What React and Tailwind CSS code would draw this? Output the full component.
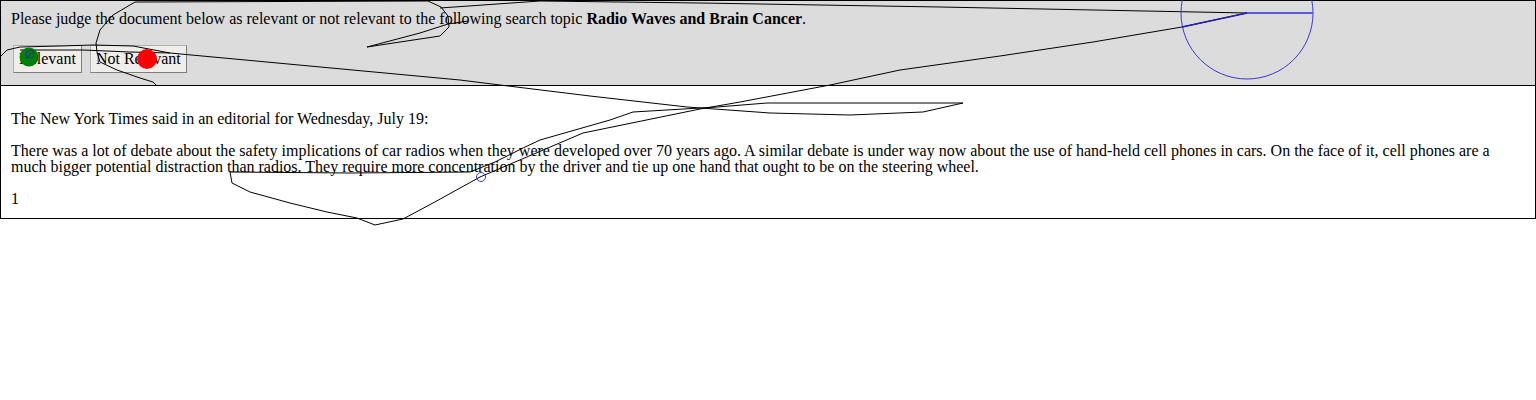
import React from "react";

function Overlay() {
  return (
    <svg
      className="absolute left-0 top-0 pointer-events-none overflow-visible"
      width="1536"
      height="240"
      viewBox="0 0 1536 240"
    >
      <g fill="none" stroke="#000" strokeWidth="1" strokeLinejoin="round">
        <path d="M -5 62 L 0 57 L 7 50 L 20 47 L 60 46 L 93 45 L 133 46 L 170 53 L 460 80 L 500 85 L 590 96 L 687 107 L 770 113 L 850 115 L 923 112 L 963 103 L 767 103 L 717 107 L 633 112 L 610 120 L 540 140 L 523 148 L 495 162 L 470 172 L 350 173 L 230 172 L 232 183 L 250 192 L 290 203 L 327 212 L 357 218 L 375 225 L 403 219 L 433 203 L 480 177 L 583 133 L 700 109 L 740 102 L 830 85 L 900 70 L 1000 56 L 1093 42 L 1182 27 L 1247 13" />
        <path d="M 20 50 L 83 50 L 130 52 L 170 53" />
        <path d="M 135 2 L 113 15 L 100 30 L 96 43 L 97 52 L 100 62 L 117 70 L 140 78 L 153 82 L 157 86" />
        <path d="M 135 2 L 428 1 L 441 7 L 448 16 L 449 27 L 440 36 L 400 42 L 367 47 L 420 33 L 448 24 L 468 21" />
        <path d="M 440 8 L 540 1 L 700 3 L 940 7 L 1247 13" />
      </g>
      <circle cx="29" cy="57" r="9.5" fill="#008000" />
      <circle cx="147" cy="59" r="10" fill="#ff0000" />
      <circle cx="30" cy="54" r="4" fill="none" stroke="#1a3a8a" strokeWidth="1" />
      <path d="M 25 59 L 34 51" stroke="#1a3a8a" strokeWidth="1" fill="none" />
      <circle cx="1247" cy="13" r="66" fill="none" stroke="#3a3ad0" strokeWidth="1" />
      <line x1="1247" y1="13" x2="1313" y2="13" stroke="#5a5ae0" strokeWidth="2" />
      <line x1="1247" y1="13" x2="1182" y2="27" stroke="#2020b0" strokeWidth="1.5" />
      <circle cx="481" cy="177" r="4.5" fill="none" stroke="#3a3ad0" strokeWidth="1" />
    </svg>
  );
}

export default function App() {
  return (
    <div className="relative w-[1536px] min-h-[240px] font-['Liberation_Serif','Times_New_Roman',serif] text-[16px] leading-[16px] text-black">
      <div className="border border-black">
        <div className="h-[85px] bg-[#dcdcdc] border-b border-black px-[10px] pt-[10px]">
          <p>
            Please judge the document below as relevant or not relevant to the following search topic{" "}
            <b>Radio Waves and Brain Cancer</b>.
          </p>
          <div className="mt-[18px] ml-[2px] flex gap-[8px]">
            <button className="h-[28px] px-[5px] flex items-center bg-[#efeeeb] border border-[#b0b0b0] border-r-[#7f7f7f] border-b-[#7f7f7f] text-[16px] leading-[16px]">
              Relevant
            </button>
            <button className="h-[28px] px-[5px] flex items-center bg-[#efeeeb] border border-[#b0b0b0] border-r-[#7f7f7f] border-b-[#7f7f7f] text-[16px] leading-[16px]">
              Not Relevant
            </button>
          </div>
        </div>
        <div className="px-[10px] pt-[25px] pb-[11px]">
          <p>The New York Times said in an editorial for Wednesday, July 19:</p>
          <p className="mt-[16px]">
            There was a lot of debate about the safety implications of car radios when they were developed over 70 years ago. A similar debate is under way now about the use of hand-held cell phones in cars. On the face of it, cell phones are a much bigger potential distraction than radios. They require more concentration by the driver and tie up one hand that ought to be on the steering wheel.
          </p>
          <p className="mt-[16px]">1</p>
        </div>
      </div>
      <Overlay />
    </div>
  );
}
